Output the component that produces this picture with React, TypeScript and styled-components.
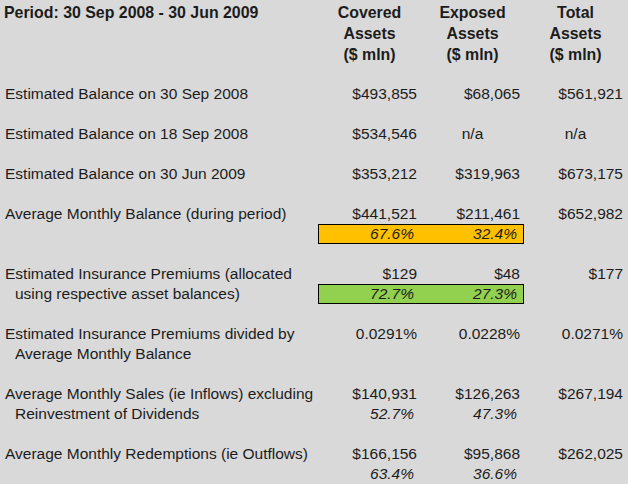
import { Fragment } from "react";
import styled, { createGlobalStyle } from "styled-components";

const GlobalStyle = createGlobalStyle`
  html, body {
    margin: 0;
    padding: 0;
    background: #d9d9d9;
  }
  body {
    width: 628px;
    height: 484px;
    overflow: hidden;
    font-family: "Liberation Sans", Arial, sans-serif;
    font-size: 15.5px;
    color: #1c1c1c;
  }
`;

const COLS = "318px 103px 103px 103px";

const Sheet = styled.div`
  width: 628px;
  height: 484px;
  display: flex;
  flex-direction: column;
`;

const Header = styled.div`
  display: grid;
  grid-template-columns: ${COLS};
  height: 84px;
  padding-top: 2px;
  box-sizing: border-box;
  font-weight: bold;
  font-size: 15.9px;
  line-height: 21px;
`;

const Title = styled.div`
  padding-left: 4px;
  white-space: nowrap;
`;

const ColHead = styled.div`
  text-align: center;
  white-space: pre-line;
`;

const Body = styled.div`
  display: flex;
  flex-direction: column;
  gap: 20px;
`;

const Section = styled.div`
  display: flex;
  flex-direction: column;
`;

const Line = styled.div`
  display: grid;
  grid-template-columns: ${COLS};
  height: 20px;
  line-height: 20px;
`;

const Label = styled.div<{ $indent?: boolean }>`
  padding-left: ${(p) => (p.$indent ? "15px" : "5px")};
  white-space: nowrap;
`;

const Value = styled.div<{ $center?: boolean }>`
  text-align: ${(p) => (p.$center ? "center" : "right")};
  padding-right: ${(p) => (p.$center ? "0" : "4px")};
  white-space: nowrap;
`;

const Pct = styled.div`
  text-align: right;
  padding-right: 7px;
  font-style: italic;
  white-space: nowrap;
`;

const Band = styled.div<{ $color: string }>`
  grid-column: span 2;
  display: grid;
  grid-template-columns: 102px 102px;
  box-sizing: border-box;
  width: 206px;
  height: 20px;
  line-height: 18px;
  background: ${(p) => p.$color};
  border: 1px solid #000;

  & > ${Pct}:last-child {
    padding-right: 6px;
  }
`;

type LineData = {
  label?: string;
  indent?: boolean;
  values?: string[];
  pcts?: string[];
  band?: string;
};

const ORANGE = "#ffc000";
const GREEN = "#92d050";

const sections: LineData[][] = [
  [{ label: "Estimated Balance on 30 Sep 2008", values: ["$493,855", "$68,065", "$561,921"] }],
  [{ label: "Estimated Balance on 18 Sep 2008", values: ["$534,546", "n/a", "n/a"] }],
  [{ label: "Estimated Balance on 30 Jun 2009", values: ["$353,212", "$319,963", "$673,175"] }],
  [
    { label: "Average Monthly Balance (during period)", values: ["$441,521", "$211,461", "$652,982"] },
    { pcts: ["67.6%", "32.4%"], band: ORANGE },
  ],
  [
    { label: "Estimated Insurance Premiums (allocated", values: ["$129", "$48", "$177"] },
    { label: "using respective asset balances)", indent: true, pcts: ["72.7%", "27.3%"], band: GREEN },
  ],
  [
    { label: "Estimated Insurance Premiums divided by", values: ["0.0291%", "0.0228%", "0.0271%"] },
    { label: "Average Monthly Balance", indent: true },
  ],
  [
    { label: "Average Monthly Sales (ie Inflows) excluding", values: ["$140,931", "$126,263", "$267,194"] },
    { label: "Reinvestment of Dividends", indent: true, pcts: ["52.7%", "47.3%"] },
  ],
  [
    { label: "Average Monthly Redemptions (ie Outflows)", values: ["$166,156", "$95,868", "$262,025"] },
    { pcts: ["63.4%", "36.6%"] },
  ],
];

const headings = ["Covered\nAssets\n($ mln)", "Exposed\nAssets\n($ mln)", "Total\nAssets\n($ mln)"];

const SheetLine = ({ data }: { data: LineData }) => {
  const pcts = data.pcts?.map((p, i) => <Pct key={i}>{p}</Pct>);
  return (
    <Line>
      <Label $indent={data.indent}>{data.label}</Label>
      {data.values?.map((v, i) => (
        <Value key={i} $center={v === "n/a"}>
          {v}
        </Value>
      ))}
      {pcts && (data.band ? <Band $color={data.band}>{pcts}</Band> : <Fragment>{pcts}</Fragment>)}
    </Line>
  );
};

export default function App() {
  return (
    <>
      <GlobalStyle />
      <Sheet>
        <Header>
          <Title>Period: 30 Sep 2008 - 30 Jun 2009</Title>
          {headings.map((h) => (
            <ColHead key={h}>{h}</ColHead>
          ))}
        </Header>
        <Body>
          {sections.map((lines, i) => (
            <Section key={i}>
              {lines.map((l, j) => (
                <SheetLine key={j} data={l} />
              ))}
            </Section>
          ))}
        </Body>
      </Sheet>
    </>
  );
}
